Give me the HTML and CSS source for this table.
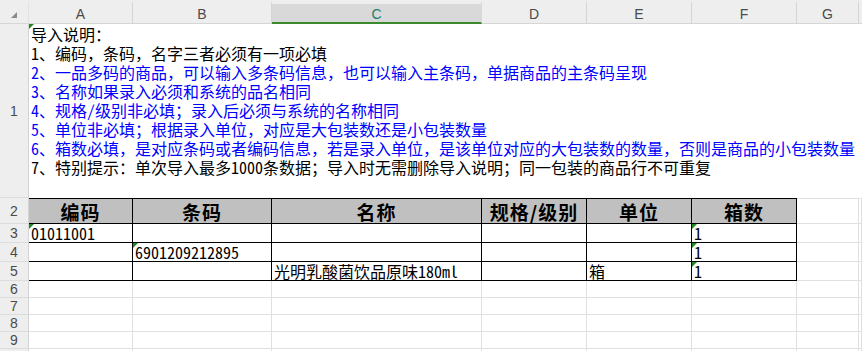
FILE: index.html
```html
<!DOCTYPE html>
<html lang="zh-CN">
<head>
<meta charset="utf-8">
<title>导入模板</title>
<link rel="stylesheet" href="styles.css">
</head>
<body>
<div class="sheet">
  <div class="ch corner"><span class="tri"></span></div>
  <div class="ch">A</div>
  <div class="ch">B</div>
  <div class="ch sel">C</div>
  <div class="ch">D</div>
  <div class="ch">E</div>
  <div class="ch">F</div>
  <div class="ch">G</div>
  <div class="ch last"></div>

  <div class="rh">1</div>
  <div class="merged mark">
    <div>导入说明：</div>
    <div>1、编码，条码，名字三者必须有一项必填</div>
    <div class="blue">2、一品多码的商品，可以输入多条码信息，也可以输入主条码，单据商品的主条码呈现</div>
    <div class="blue">3、名称如果录入必须和系统的品名相同</div>
    <div class="blue">4、规格/级别非必填；录入后必须与系统的名称相同</div>
    <div class="blue">5、单位非必填；根据录入单位，对应是大包装数还是小包装数量</div>
    <div class="blue">6、箱数必填，是对应条码或者编码信息，若是录入单位，是该单位对应的大包装数的数量，否则是商品的小包装数量</div>
    <div>7、特别提示：单次导入最多1000条数据；导入时无需删除导入说明；同一包装的商品行不可重复</div>
  </div>

  <div class="rh">2</div>
  <div class="th">编码</div>
  <div class="th">条码</div>
  <div class="th">名称</div>
  <div class="th">规格/级别</div>
  <div class="th">单位</div>
  <div class="th">箱数</div>
  <div class="c top"></div>
  <div class="c top"></div>

  <div class="rh">3</div>
  <div class="td mark">01011001</div>
  <div class="td"></div>
  <div class="td"></div>
  <div class="td"></div>
  <div class="td"></div>
  <div class="td mark">1</div>
  <div class="c"></div>
  <div class="c"></div>

  <div class="rh">4</div>
  <div class="td"></div>
  <div class="td mark">6901209212895</div>
  <div class="td"></div>
  <div class="td"></div>
  <div class="td"></div>
  <div class="td mark">1</div>
  <div class="c"></div>
  <div class="c"></div>

  <div class="rh">5</div>
  <div class="td"></div>
  <div class="td"></div>
  <div class="td">光明乳酸菌饮品原味180ml</div>
  <div class="td"></div>
  <div class="td">箱</div>
  <div class="td mark">1</div>
  <div class="c"></div>
  <div class="c"></div>

  <div class="rh">6</div>
  <div class="c"></div><div class="c"></div><div class="c"></div><div class="c"></div><div class="c"></div><div class="c"></div><div class="c"></div><div class="c"></div>
  <div class="rh">7</div>
  <div class="c"></div><div class="c"></div><div class="c"></div><div class="c"></div><div class="c"></div><div class="c"></div><div class="c"></div><div class="c"></div>
  <div class="rh">8</div>
  <div class="c"></div><div class="c"></div><div class="c"></div><div class="c"></div><div class="c"></div><div class="c"></div><div class="c"></div><div class="c"></div>
  <div class="rh">9</div>
  <div class="c"></div><div class="c"></div><div class="c"></div><div class="c"></div><div class="c"></div><div class="c"></div><div class="c"></div><div class="c"></div>
  <div class="rh"></div>
  <div class="c"></div><div class="c"></div><div class="c"></div><div class="c"></div><div class="c"></div><div class="c"></div><div class="c"></div><div class="c"></div>
</div>
</body>
</html>
```
FILE: styles.css
```css
* { box-sizing: border-box; }
html, body { margin: 0; padding: 0; background: #fff; overflow: hidden; }
body { width: 862px; height: 351px; }

.sheet {
  display: grid;
  grid-template-columns: 29px 104px 139px 210px 105px 105px 105px 62px 1fr;
  grid-template-rows: 24px 174px 26px 19px 19px 19px 17px 17px 17px 17px 17px;
  font-family: "Noto Sans Mono CJK SC", "Noto Sans CJK SC", sans-serif;
  font-size: 16px;
  color: #000;
}

.ch {
  background: #eeeeee;
  border-top: 4px solid #eeeeee;
  border-right: 1px solid #d4d4d4;
  border-bottom: 1px solid #d6d6d6;
  font-family: "Liberation Sans", Arial, sans-serif;
  font-size: 14px;
  color: #4a4a4a;
  display: flex;
  align-items: center;
  justify-content: center;
  padding-top: 1px;
}
.ch.corner { position: relative; border-right: 1px solid #e2e2e2; }
.tri {
  position: absolute;
  left: 11px;
  top: 8px;
  width: 0; height: 0;
  border-left: 6px solid transparent;
  border-bottom: 6px solid #8a8a8a;
}
.ch.sel {
  background: #d9d9d9;
  border-bottom: 2px solid #3c8a2e;
  border-right: 1px solid #d9d9d9;
  color: #1b7d72;
}
.ch.last { border-right: none; }

.rh {
  background: #eeeeee;
  border-right: 1px solid #d4d4d4;
  border-bottom: 1px solid #dcdcdc;
  font-family: "Liberation Sans", Arial, sans-serif;
  font-size: 14px;
  color: #4a4a4a;
  display: flex;
  align-items: center;
  justify-content: center;
}

.merged {
  grid-column: 2 / span 8;
  padding: 1px 0 0 2px;
  line-height: 19px;
  white-space: nowrap;
  overflow: hidden;
  position: relative;
}
.blue { color: #0000ff; }

.th {
  background: #c0c0c0;
  border-top: 1px solid #000;
  border-right: 1px solid #000;
  border-bottom: 1px solid #000;
  font-family: "Noto Sans CJK SC", sans-serif;
  font-weight: 700;
  font-size: 19px;
  letter-spacing: 1px;
  display: flex;
  align-items: center;
  justify-content: center;
  line-height: 1;
}

.td {
  border-right: 1px solid #000;
  border-bottom: 1px solid #000;
  padding: 0 0 0 2px;
  line-height: 19px;
  white-space: nowrap;
  position: relative;
  overflow: visible;
}

.c {
  border-right: 1px solid #e0e0e0;
  border-bottom: 1px solid #e0e0e0;
}
.c.top { border-top: 1px solid #e0e0e0; }

.mark::before {
  content: "";
  position: absolute;
  left: 0;
  top: 0;
  width: 0; height: 0;
  border-top: 5px solid #1f8a1f;
  border-right: 5px solid transparent;
}
```
